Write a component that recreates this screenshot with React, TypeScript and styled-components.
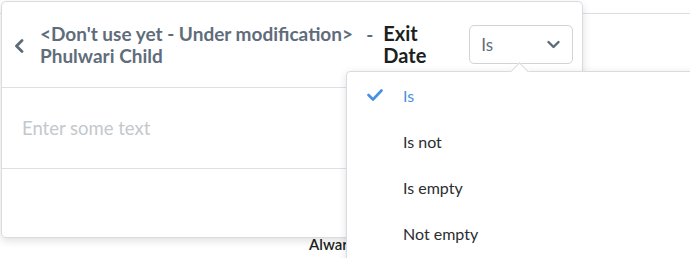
import React from "react";
import styled, { createGlobalStyle } from "styled-components";

const Global = createGlobalStyle`
  html, body { margin: 0; padding: 0; background: #fff; }
  body { font-family: Lato, "Noto Sans", sans-serif; overflow: hidden; }
`;

const Page = styled.div`
  position: relative;
  width: 690px;
  height: 258px;
  overflow: hidden;
  background: #fff;
`;

const BackPanel = styled.div`
  margin-top: 13px;
  height: 260px;
  border-top: 1px solid #dcdfe3;
  box-shadow: 0 2px 4px rgba(0, 0, 0, 0.08);
  box-sizing: border-box;
  padding: 220px 0 0 309px;
`;

const BackText = styled.span`
  font-size: 15px;
  font-weight: 600;
  color: #1c1f22;
`;

const Card = styled.div`
  position: absolute;
  left: 1px;
  top: 1px;
  width: 582px;
  height: 237px;
  box-sizing: border-box;
  background: #fff;
  border: 1px solid #d8dce0;
  border-radius: 5px;
  box-shadow: 0 3px 8px rgba(0, 0, 0, 0.12);
  display: flex;
  flex-direction: column;
`;

const Header = styled.div`
  height: 86px;
  box-sizing: border-box;
  border-bottom: 1px solid #dcdfe3;
  display: flex;
  align-items: center;
  padding: 0 9px 0 12px;
`;

const BackBtn = styled.span`
  display: flex;
  width: 26px;
  margin-top: 2px;
`;

const Title = styled.div`
  font-size: 19px;
  font-weight: 700;
  line-height: 22px;
  color: #5f6d7b;
  width: 327px;
  margin-top: 0;
`;

const Dash = styled.span`
  font-size: 19px;
  font-weight: 700;
  color: #5f6d7b;
  width: 17px;
  margin-top: -21px;
`;

const FieldName = styled.div`
  font-size: 20px;
  font-weight: 700;
  line-height: 22px;
  color: #1c1f22;
  width: 86px;
  margin-top: -1px;
`;

const SelectBox = styled.div`
  width: 104px;
  height: 39px;
  box-sizing: border-box;
  border: 1px solid #d0d4d8;
  border-radius: 5px;
  display: flex;
  align-items: center;
  justify-content: space-between;
  padding: 0 12px 0 11px;
  font-size: 17px;
  color: #5f6d7b;
`;

const InputRow = styled.div`
  height: 81px;
  box-sizing: border-box;
  border-bottom: 1px solid #dcdfe3;
  display: flex;
  align-items: center;
  padding: 0 20px;
`;

const Placeholder = styled.span`
  font-size: 18.5px;
  color: #c3c8cd;
  margin-top: -1px;
`;

const Menu = styled.div`
  position: absolute;
  left: 346px;
  top: 71px;
  width: 360px;
  height: 200px;
  box-sizing: border-box;
  background: #fff;
  border: 1px solid #d8dce0;
  border-radius: 4px;
  box-shadow: 0 2px 8px rgba(0, 0, 0, 0.12);
`;

const Caret = styled.div`
  position: absolute;
  left: 166px;
  top: -7px;
  width: 12px;
  height: 12px;
  background: #fff;
  border-left: 1px solid #d8dce0;
  border-top: 1px solid #d8dce0;
  transform: rotate(45deg);
`;

const Item = styled.div<{ $active?: boolean }>`
  height: 46px;
  display: flex;
  align-items: center;
  font-size: 16px;
  color: ${(p) => (p.$active ? "#4a90e2" : "#2b2e31")};
`;

const CheckSlot = styled.span`
  width: 56px;
  display: flex;
  justify-content: flex-end;
  padding-right: 20px;
  box-sizing: border-box;
`;

const ChevronLeft = () => (
  <svg width="10" height="14" viewBox="0 0 10 14">
    <polyline points="8,1.5 2.5,7 8,12.5" fill="none" stroke="#5d6b79" strokeWidth="2.8" strokeLinecap="round" strokeLinejoin="round" />
  </svg>
);

const ChevronDown = () => (
  <svg width="13" height="9" viewBox="0 0 13 9">
    <polyline points="1.5,2 6.5,7 11.5,2" fill="none" stroke="#5d6b79" strokeWidth="2.4" strokeLinecap="round" strokeLinejoin="round" />
  </svg>
);

const Check = () => (
  <svg width="16" height="12" viewBox="0 0 16 12">
    <polyline points="1.5,6 6,10.5 14.5,1.5" fill="none" stroke="#4a90e2" strokeWidth="2.6" strokeLinecap="round" strokeLinejoin="round" />
  </svg>
);

const options = ["Is", "Is not", "Is empty", "Not empty"];

export default function App() {
  return (
    <>
      <Global />
      <Page>
        <BackPanel>
          <BackText>Alwar</BackText>
        </BackPanel>
        <Card>
          <Header>
            <BackBtn>
              <ChevronLeft />
            </BackBtn>
            <Title>
              &lt;Don't use yet - Under modification&gt;
              <br />
              Phulwari Child
            </Title>
            <Dash>-</Dash>
            <FieldName>
              Exit
              <br />
              Date
            </FieldName>
            <SelectBox>
              <span>Is</span>
              <ChevronDown />
            </SelectBox>
          </Header>
          <InputRow>
            <Placeholder>Enter some text</Placeholder>
          </InputRow>
        </Card>
        <Menu>
          <Caret />
          {options.map((o, i) => (
            <Item key={o} $active={i === 0}>
              <CheckSlot>{i === 0 ? <Check /> : null}</CheckSlot>
              {o}
            </Item>
          ))}
        </Menu>
      </Page>
    </>
  );
}
